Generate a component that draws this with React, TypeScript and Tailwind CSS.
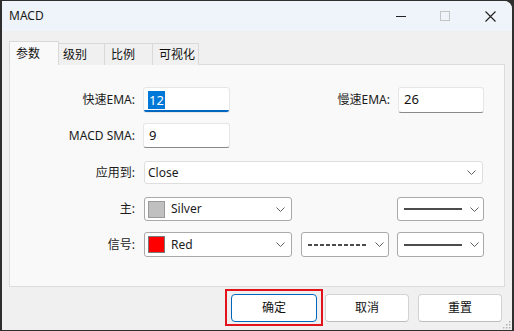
import React from "react";

const font = { fontFamily: '"Noto Sans", "Noto Sans CJK SC", sans-serif' };

function Chevron() {
  return (
    <svg width="9" height="5" viewBox="0 0 9 5" className="shrink-0">
      <polyline points="0.5,0.5 4.5,4.5 8.5,0.5" fill="none" stroke="#5f5f5f" strokeWidth="1" />
    </svg>
  );
}

function Label({ children, className = "" }: { children: React.ReactNode; className?: string }) {
  return <div className={"text-right text-[12px] text-[#1b1b1b] " + className}>{children}</div>;
}

function ColorSelect({ color, border, name }: { color: string; border: string; name: string }) {
  return (
    <div className="ml-[9px] w-[148px] h-full bg-white border border-[#a9a9a9] rounded-[3px] flex items-center pl-[3px] pr-[6px]">
      <div className="w-[17px] h-[17px] border" style={{ background: color, borderColor: border }} />
      <span className="ml-[6px] text-[12px] text-[#1b1b1b] flex-1">{name}</span>
      <Chevron />
    </div>
  );
}

function LineSelect({ dashed = false, className = "" }: { dashed?: boolean; className?: string }) {
  return (
    <div className={"w-[87px] h-full bg-white border border-[#a9a9a9] rounded-[3px] flex items-center pl-[6px] pr-[4px] " + className}>
      <svg width="58" height="2" viewBox="0 0 58 2" className="shrink-0">
        <line x1="0" y1="1" x2="58" y2="1" stroke="#111" strokeWidth="1.3" strokeDasharray={dashed ? "4 2" : undefined} />
      </svg>
      <div className="flex-1" />
      <Chevron />
    </div>
  );
}

export default function App() {
  return (
    <div className="w-[514px] h-[331px] bg-[#2e2e2e] overflow-hidden" style={font}>
      <div className="ml-[2px] mt-[1px] w-[510px] h-[329px] bg-[#f0f0f0] rounded-tr-[8px] flex flex-col relative">
        {/* title bar */}
        <div className="h-[30px] bg-[#eef4f9] rounded-tr-[8px] flex items-center shrink-0">
          <span className="ml-[7px] text-[12px] text-[#1a1a1a]">MACD</span>
          <div className="flex-1" />
          <div className="w-[10px] h-[1px] bg-[#222] mr-[34px]" />
          <div className="w-[10px] h-[10px] border border-[#c4c4c4] mr-[35px]" />
          <svg width="11" height="11" viewBox="0 0 11 11" className="mr-[16px]">
            <path d="M0.5 0.5 L10.5 10.5 M10.5 0.5 L0.5 10.5" stroke="#1f1f1f" strokeWidth="1.1" />
          </svg>
        </div>

        {/* tabs */}
        <div className="mt-[10px] ml-[7px] flex items-end h-[24px] relative z-10">
          <div className="w-[50px] h-[24px] bg-[#f9f9f9] border border-b-0 border-[#d9d9d9] text-[12px] text-[#111] pl-[6px] pt-[3px]">参数</div>
          <div className="w-[46px] h-[22px] bg-[#f0f0f0] border border-l-0 border-b-0 border-[#d9d9d9] text-[12px] text-[#111] pl-[4px] pt-[2px]">级别</div>
          <div className="w-[48px] h-[22px] bg-[#f0f0f0] border border-l-0 border-b-0 border-[#d9d9d9] text-[12px] text-[#111] pl-[6px] pt-[2px]">比例</div>
          <div className="w-[46px] h-[22px] bg-[#f0f0f0] border border-l-0 border-b-0 border-[#d9d9d9] text-[12px] text-[#111] pl-[6px] pt-[2px]">可视化</div>
        </div>

        {/* panel */}
        <div className="ml-[7px] -mt-[1px] w-[496px] h-[223px] bg-[#f9f9f9] border border-[#dcdcdc] flex flex-col">
          {/* row 1 */}
          <div className="mt-[22px] h-[26px] flex items-center">
            <Label className="w-[125px]">快速EMA:</Label>
            <div className="ml-[8px] w-[87px] h-full bg-white border border-[#e6e6e6] rounded-[3px] relative flex items-center pl-[4px] overflow-hidden">
              <span className="bg-[#0078d7] text-white text-[13px] leading-[18px] px-[1px]">12</span>
              <div className="absolute left-0 right-0 bottom-0 h-[2px] bg-[#0067c0]" />
            </div>
            <Label className="w-[160px]">慢速EMA:</Label>
            <div className="ml-[8px] w-[86px] h-full bg-white border border-[#e6e6e6] border-b-[#8a8a8a] rounded-[3px] flex items-center pl-[5px] text-[13px] text-[#111]">26</div>
          </div>
          {/* row 2 */}
          <div className="mt-[10px] h-[25px] flex items-center">
            <Label className="w-[125px]">MACD SMA:</Label>
            <div className="ml-[8px] w-[87px] h-full bg-white border border-[#e6e6e6] border-b-[#8a8a8a] rounded-[3px] flex items-center pl-[5px] text-[13px] text-[#111]">9</div>
          </div>
          {/* row 3 */}
          <div className="mt-[13px] h-[23px] flex items-center">
            <Label className="w-[125px]">应用到:</Label>
            <div className="ml-[9px] w-[339px] h-full bg-white border border-[#dedede] rounded-[3px] flex items-center pl-[3px] pr-[6px]">
              <span className="text-[12px] text-[#1b1b1b] flex-1">Close</span>
              <Chevron />
            </div>
          </div>
          {/* row 4 */}
          <div className="mt-[13px] h-[24px] flex items-center">
            <Label className="w-[125px]">主:</Label>
            <ColorSelect color="#c0c0c0" border="#9a9a9a" name="Silver" />
            <LineSelect className="ml-[105px]" />
          </div>
          {/* row 5 */}
          <div className="mt-[11px] h-[25px] flex items-center">
            <Label className="w-[125px]">信号:</Label>
            <ColorSelect color="#ff0000" border="#7a7a7a" name="Red" />
            <LineSelect dashed className="ml-[9px] w-[88px]" />
            <LineSelect className="ml-[8px]" />
          </div>
        </div>

        {/* buttons */}
        <div className="mt-[7px] flex justify-end pr-[10px] h-[28px]">
          <div className="relative w-[86px] h-full bg-white border border-[#0067c0] rounded-[4px] flex items-center justify-center text-[12px] text-[#111]">
            确定
            <div className="absolute -left-[7px] -right-[7px] -top-[6px] -bottom-[5px] border-2 border-[#e3131b] pointer-events-none" />
          </div>
          <div className="ml-[8px] w-[84px] h-full bg-white border border-[#d3d3d3] border-b-[#bdbdbd] rounded-[4px] flex items-center justify-center text-[12px] text-[#111]">取消</div>
          <div className="ml-[9px] w-[84px] h-full bg-white border border-[#d3d3d3] border-b-[#bdbdbd] rounded-[4px] flex items-center justify-center text-[12px] text-[#111]">重置</div>
        </div>

        {/* resize grip */}
        <svg width="8" height="8" viewBox="0 0 8 8" className="absolute right-[1px] bottom-[1px]">
          <rect x="6" y="0" width="1.5" height="1.5" fill="#b0b0b0" />
          <rect x="3" y="3" width="1.5" height="1.5" fill="#b0b0b0" />
          <rect x="6" y="3" width="1.5" height="1.5" fill="#b0b0b0" />
          <rect x="0" y="6" width="1.5" height="1.5" fill="#b0b0b0" />
          <rect x="3" y="6" width="1.5" height="1.5" fill="#b0b0b0" />
          <rect x="6" y="6" width="1.5" height="1.5" fill="#b0b0b0" />
        </svg>
      </div>
    </div>
  );
}
